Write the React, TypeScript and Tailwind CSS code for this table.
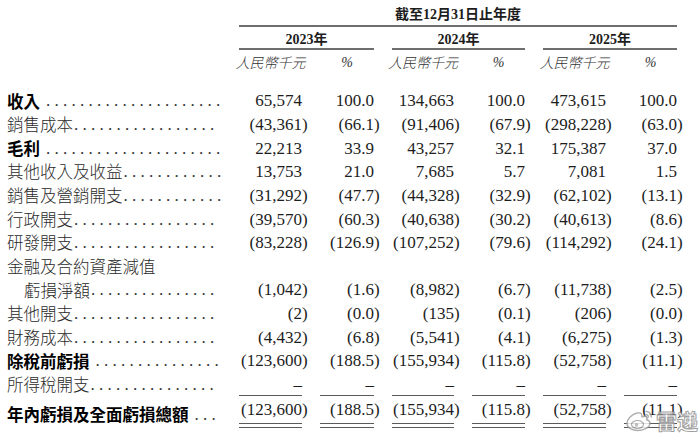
import type { ReactNode } from 'react'

type Row = {
  label: string
  bold?: boolean
  indent?: boolean
  noDots?: boolean
  values?: string[]
  underline?: boolean
  total?: boolean
}

const ROWS: Row[] = [
  { label: '收入', bold: true, values: ['65,574', '100.0', '134,663', '100.0', '473,615', '100.0'] },
  { label: '銷售成本', values: ['(43,361)', '(66.1)', '(91,406)', '(67.9)', '(298,228)', '(63.0)'] },
  { label: '毛利', bold: true, values: ['22,213', '33.9', '43,257', '32.1', '175,387', '37.0'] },
  { label: '其他收入及收益', values: ['13,753', '21.0', '7,685', '5.7', '7,081', '1.5'] },
  { label: '銷售及營銷開支', values: ['(31,292)', '(47.7)', '(44,328)', '(32.9)', '(62,102)', '(13.1)'] },
  { label: '行政開支', values: ['(39,570)', '(60.3)', '(40,638)', '(30.2)', '(40,613)', '(8.6)'] },
  { label: '研發開支', values: ['(83,228)', '(126.9)', '(107,252)', '(79.6)', '(114,292)', '(24.1)'] },
  { label: '金融及合約資產減值', noDots: true },
  { label: '虧損淨額', indent: true, values: ['(1,042)', '(1.6)', '(8,982)', '(6.7)', '(11,738)', '(2.5)'] },
  { label: '其他開支', values: ['(2)', '(0.0)', '(135)', '(0.1)', '(206)', '(0.0)'] },
  { label: '財務成本', values: ['(4,432)', '(6.8)', '(5,541)', '(4.1)', '(6,275)', '(1.3)'] },
  { label: '除稅前虧損', bold: true, values: ['(123,600)', '(188.5)', '(155,934)', '(115.8)', '(52,758)', '(11.1)'] },
  { label: '所得稅開支', values: ['–', '–', '–', '–', '–', '–'], underline: true },
]

const TOTAL: Row = {
  label: '年內虧損及全面虧損總額',
  bold: true,
  values: ['(123,600)', '(188.5)', '(155,934)', '(115.8)', '(52,758)', '(11.1)'],
  total: true,
}

const GRID = 'grid grid-cols-[221px_63px_54px_62px_53px_63px_53px] gap-x-[18px]'
const SERIF = 'font-["Liberation_Serif","Noto_Sans_CJK_TC",serif]'
const CJK = 'font-["Noto_Sans_CJK_TC","Noto_Sans_CJK_SC",sans-serif]'

// dot leader sized to the room left after the label (". " = 8.5px at 17px)
function leader(row: Row) {
  const room = 221 - (row.indent ? 24 : 7) - 4 - row.label.length * 16.5 - (row.bold ? 6 : 1)
  const n = Math.max(0, Math.round((room + 4.25) / 8.5))
  return Array(n).fill('.').join(' ')
}

function Num({ v }: { v: string }) {
  if (v.startsWith('(')) {
    return (
      <>
        {v.slice(0, -1)}
        <span className="inline-block w-0">)</span>
      </>
    )
  }
  return <>{v}</>
}

function Label({ row }: { row: Row }) {
  return (
    <div className={`flex items-center ${row.indent ? 'pl-[24px]' : 'pl-[7px]'}`}>
      <span
        className={`${CJK} whitespace-nowrap text-[16.5px] leading-none ${
          row.bold ? 'font-bold text-black' : 'font-light text-[#2a2a2a]'
        }`}
      >
        {row.label}
      </span>
      {!row.noDots && (
        <span
          className={`${SERIF} whitespace-nowrap text-[17px] leading-none text-[#333] ${
            row.bold ? 'ml-[6px]' : 'ml-[1px]'
          }`}
        >
          {leader(row)}
        </span>
      )}
    </div>
  )
}

function DataRow({ row }: { row: Row }) {
  return (
    <div className={`${GRID} ${row.total ? 'h-[32px] pt-[4px]' : 'h-[23.65px]'}`}>
      <Label row={row} />
      {(row.values ?? ['', '', '', '', '', '']).map((v, i) => (
        <div
          key={i}
          className={`${SERIF} flex flex-col justify-center text-right text-[17px] leading-none text-[#1d1d1d] ${
            row.underline ? 'border-b-[1.5px] border-[#5a5a5a]' : ''
          }`}
        >
          <div>
            <Num v={v} />
          </div>
          {row.total && <div className="mt-[5px] h-[4.5px] border-y-[1.5px] border-[#5a5a5a]" />}
        </div>
      ))}
    </div>
  )
}

function GroupHead({ children }: { children: ReactNode }) {
  return (
    <div className="col-span-2 flex h-[23px] items-center justify-center border-b-2 border-[#6e6e6e] pt-[3px]">
      {children}
    </div>
  )
}

function Weibo() {
  return (
    <div className="pointer-events-none absolute bottom-[6px] right-[2px] flex items-center gap-[1px] opacity-80">
      <svg width="30" height="24" viewBox="0 0 30 24">
        <path
          d="M12 5c-5 1-10 6-10 10.5C2 20 7.5 22.5 13 22.5c7 0 12-3.8 12-7.3 0-2-1.8-3-3.4-3.4 1-2 .4-4.2-2.2-3.6-1.4.3-2.4 1-2.6.6.6-2-.3-4.6-4.8-3.8z"
          fill="white"
          stroke="#9a9a9a"
          strokeWidth="1.4"
        />
        <ellipse cx="12.5" cy="16.5" rx="6" ry="4" fill="white" stroke="#9a9a9a" strokeWidth="1.2" />
        <circle cx="11.5" cy="17" r="1.8" fill="#b0b0b0" />
        <path
          d="M21 3.5c3 0 5.5 2.2 5.2 5.6M21 6.5c1.4 0 2.6 1 2.3 2.6"
          fill="none"
          stroke="#9a9a9a"
          strokeWidth="1.4"
          strokeLinecap="round"
        />
      </svg>
      <span
        className='font-["Noto_Sans_CJK_SC",sans-serif] text-[21px] font-bold leading-none text-white'
        style={{ WebkitTextStroke: '1px #8a8a8a' }}
      >
        雷递
      </span>
    </div>
  )
}

export default function App() {
  return (
    <div className="relative h-[438px] w-[700px] overflow-hidden bg-white">
      <div className={`${GRID} pt-[1px]`}>
        <div />
        <div
          className={`${SERIF} col-span-6 flex h-[26px] items-center justify-center border-b-2 border-[#6e6e6e] pt-[2px] text-[14px] font-bold text-[#1d1d1d]`}
        >
          截至12月31日止年度
        </div>
      </div>
      <div className={`${GRID} ${SERIF} text-[14px] font-bold text-[#1d1d1d]`}>
        <div />
        <GroupHead>2023年</GroupHead>
        <GroupHead>2024年</GroupHead>
        <GroupHead>2025年</GroupHead>
      </div>
      <div className={`${GRID} h-[24px] items-center text-[14px] italic text-[#333]`}>
        <div />
        {['人民幣千元', '%', '人民幣千元', '%', '人民幣千元', '%'].map((t, i) => (
          <div key={i} className={`${i % 2 ? SERIF : CJK} flex justify-center whitespace-nowrap font-light`}>
            {t}
          </div>
        ))}
      </div>
      <div className="h-[15px]" />
      {ROWS.map((row) => (
        <DataRow key={row.label} row={row} />
      ))}
      <DataRow row={TOTAL} />
      <Weibo />
    </div>
  )
}
